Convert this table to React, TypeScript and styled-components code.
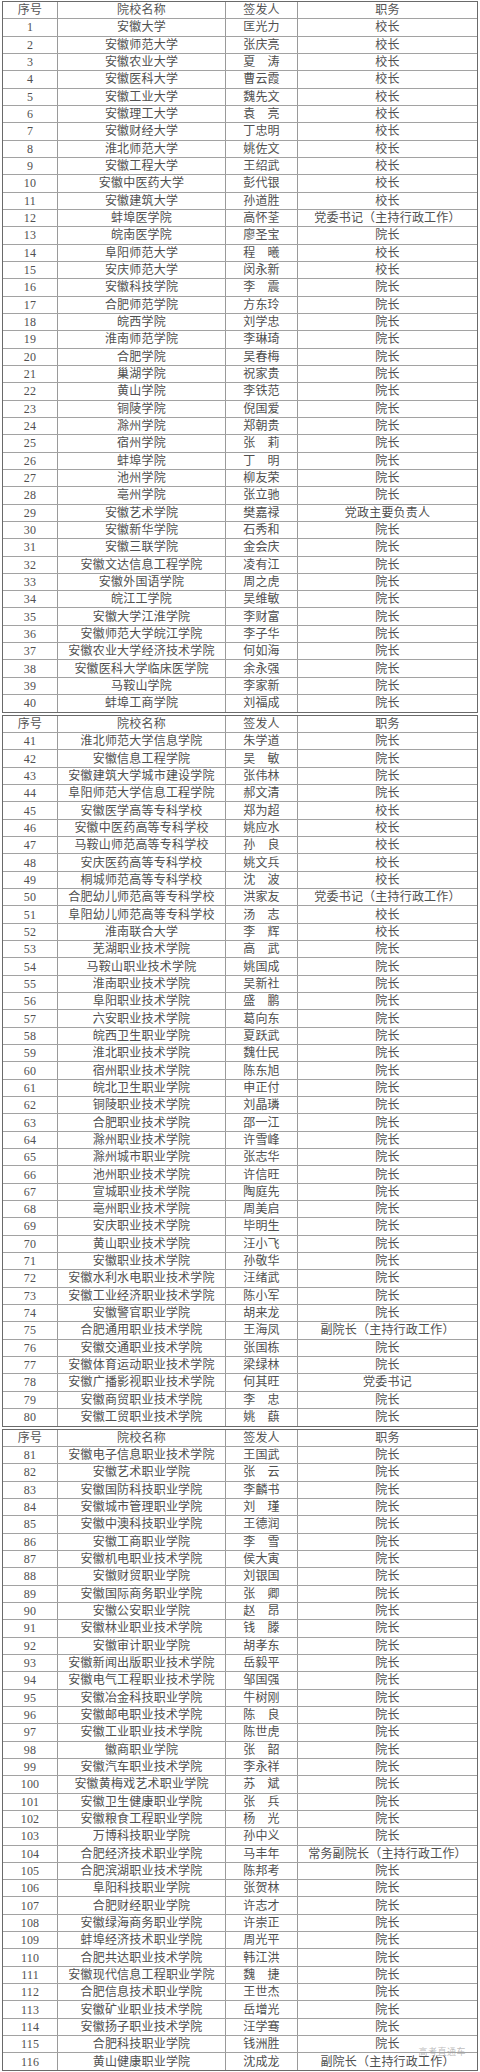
import React from 'react';
import styled, { createGlobalStyle } from 'styled-components';

type Entry = [number, string, string, string];

const GlobalStyle = createGlobalStyle`
  html, body {
    margin: 0;
    padding: 0;
    background: #ffffff;
  }
  * {
    box-sizing: border-box;
  }
`;

const Page = styled.div`
  position: relative;
  width: 480px;
  padding: 1px 2px 2px 2px;
  display: flex;
  flex-direction: column;
  gap: 2px;
  font-family: 'Liberation Serif', 'Noto Sans CJK SC', serif;
  color: #505050;
  background: #fff;
`;

const Sheet = styled.div`
  width: 476px;
  border: 1px solid #6a6a6a;
  display: flex;
  flex-direction: column;
`;

const Row = styled.div`
  display: grid;
  grid-template-columns: 55px 168px 72px 179px;
  height: 17.33px;
  border-bottom: 1px solid #a2a2a2;

  &:last-child {
    border-bottom: none;
    height: 16.7px;
  }
`;

const Cell = styled.div<{ $head?: boolean }>`
  display: flex;
  align-items: center;
  justify-content: center;
  font-size: 12px;
  line-height: 1;
  white-space: nowrap;
  overflow: hidden;
  border-right: 1px solid #9a9a9a;
  color: ${p => (p.$head ? '#555' : '#505050')};
  letter-spacing: 0.2px;

  &:last-child {
    border-right: none;
  }
`;

const Watermark = styled.div`
  position: absolute;
  right: 14px;
  bottom: 15px;
  font-family: 'Noto Sans CJK SC', sans-serif;
  font-size: 9px;
  color: rgba(160, 160, 160, 0.7);
  letter-spacing: 0.5px;
  pointer-events: none;
`;

const part1: Entry[] = [
  [1, '安徽大学', '匡光力', '校长'],
  [2, '安徽师范大学', '张庆亮', '校长'],
  [3, '安徽农业大学', '夏　涛', '校长'],
  [4, '安徽医科大学', '曹云霞', '校长'],
  [5, '安徽工业大学', '魏先文', '校长'],
  [6, '安徽理工大学', '袁　亮', '校长'],
  [7, '安徽财经大学', '丁忠明', '校长'],
  [8, '淮北师范大学', '姚佐文', '校长'],
  [9, '安徽工程大学', '王绍武', '校长'],
  [10, '安徽中医药大学', '彭代银', '校长'],
  [11, '安徽建筑大学', '孙道胜', '校长'],
  [12, '蚌埠医学院', '高怀荃', '党委书记（主持行政工作）'],
  [13, '皖南医学院', '廖圣宝', '院长'],
  [14, '阜阳师范大学', '程　曦', '校长'],
  [15, '安庆师范大学', '闵永新', '校长'],
  [16, '安徽科技学院', '李　震', '院长'],
  [17, '合肥师范学院', '方东玲', '院长'],
  [18, '皖西学院', '刘学忠', '院长'],
  [19, '淮南师范学院', '李琳琦', '院长'],
  [20, '合肥学院', '吴春梅', '院长'],
  [21, '巢湖学院', '祝家贵', '院长'],
  [22, '黄山学院', '李铁范', '院长'],
  [23, '铜陵学院', '倪国爱', '院长'],
  [24, '滁州学院', '郑朝贵', '院长'],
  [25, '宿州学院', '张　莉', '院长'],
  [26, '蚌埠学院', '丁　明', '院长'],
  [27, '池州学院', '柳友荣', '院长'],
  [28, '亳州学院', '张立驰', '院长'],
  [29, '安徽艺术学院', '樊嘉禄', '党政主要负责人'],
  [30, '安徽新华学院', '石秀和', '院长'],
  [31, '安徽三联学院', '金会庆', '院长'],
  [32, '安徽文达信息工程学院', '凌有江', '院长'],
  [33, '安徽外国语学院', '周之虎', '院长'],
  [34, '皖江工学院', '吴维敏', '院长'],
  [35, '安徽大学江淮学院', '李财富', '院长'],
  [36, '安徽师范大学皖江学院', '李子华', '院长'],
  [37, '安徽农业大学经济技术学院', '何如海', '院长'],
  [38, '安徽医科大学临床医学院', '余永强', '院长'],
  [39, '马鞍山学院', '李家新', '院长'],
  [40, '蚌埠工商学院', '刘福成', '院长'],
];

const part2: Entry[] = [
  [41, '淮北师范大学信息学院', '朱学道', '院长'],
  [42, '安徽信息工程学院', '吴　敏', '院长'],
  [43, '安徽建筑大学城市建设学院', '张伟林', '院长'],
  [44, '阜阳师范大学信息工程学院', '郝文清', '院长'],
  [45, '安徽医学高等专科学校', '郑为超', '校长'],
  [46, '安徽中医药高等专科学校', '姚应水', '校长'],
  [47, '马鞍山师范高等专科学校', '孙　良', '校长'],
  [48, '安庆医药高等专科学校', '姚文兵', '校长'],
  [49, '桐城师范高等专科学校', '沈　波', '校长'],
  [50, '合肥幼儿师范高等专科学校', '洪家友', '党委书记（主持行政工作）'],
  [51, '阜阳幼儿师范高等专科学校', '汤　志', '校长'],
  [52, '淮南联合大学', '李　辉', '校长'],
  [53, '芜湖职业技术学院', '高　武', '院长'],
  [54, '马鞍山职业技术学院', '姚国成', '院长'],
  [55, '淮南职业技术学院', '吴新社', '院长'],
  [56, '阜阳职业技术学院', '盛　鹏', '院长'],
  [57, '六安职业技术学院', '葛向东', '院长'],
  [58, '皖西卫生职业学院', '夏跃武', '院长'],
  [59, '淮北职业技术学院', '魏仕民', '院长'],
  [60, '宿州职业技术学院', '陈东旭', '院长'],
  [61, '皖北卫生职业学院', '申正付', '院长'],
  [62, '铜陵职业技术学院', '刘晶璘', '院长'],
  [63, '合肥职业技术学院', '邵一江', '院长'],
  [64, '滁州职业技术学院', '许雪峰', '院长'],
  [65, '滁州城市职业学院', '张志华', '院长'],
  [66, '池州职业技术学院', '许信旺', '院长'],
  [67, '宣城职业技术学院', '陶庭先', '院长'],
  [68, '亳州职业技术学院', '周美启', '院长'],
  [69, '安庆职业技术学院', '毕明生', '院长'],
  [70, '黄山职业技术学院', '汪小飞', '院长'],
  [71, '安徽职业技术学院', '孙敬华', '院长'],
  [72, '安徽水利水电职业技术学院', '汪绪武', '院长'],
  [73, '安徽工业经济职业技术学院', '陈小军', '院长'],
  [74, '安徽警官职业学院', '胡来龙', '院长'],
  [75, '合肥通用职业技术学院', '王海凤', '副院长（主持行政工作）'],
  [76, '安徽交通职业技术学院', '张国栋', '院长'],
  [77, '安徽体育运动职业技术学院', '梁绿林', '院长'],
  [78, '安徽广播影视职业技术学院', '何其旺', '党委书记'],
  [79, '安徽商贸职业技术学院', '李　忠', '院长'],
  [80, '安徽工贸职业技术学院', '姚　蕻', '院长'],
];

const part3: Entry[] = [
  [81, '安徽电子信息职业技术学院', '王国武', '院长'],
  [82, '安徽艺术职业学院', '张　云', '院长'],
  [83, '安徽国防科技职业学院', '李麟书', '院长'],
  [84, '安徽城市管理职业学院', '刘　瑾', '院长'],
  [85, '安徽中澳科技职业学院', '王德润', '院长'],
  [86, '安徽工商职业学院', '李　雪', '院长'],
  [87, '安徽机电职业技术学院', '侯大寅', '院长'],
  [88, '安徽财贸职业学院', '刘银国', '院长'],
  [89, '安徽国际商务职业学院', '张　卿', '院长'],
  [90, '安徽公安职业学院', '赵　昂', '院长'],
  [91, '安徽林业职业技术学院', '钱　滕', '院长'],
  [92, '安徽审计职业学院', '胡孝东', '院长'],
  [93, '安徽新闻出版职业技术学院', '岳毅平', '院长'],
  [94, '安徽电气工程职业技术学院', '邹国强', '院长'],
  [95, '安徽冶金科技职业学院', '牛树刚', '院长'],
  [96, '安徽邮电职业技术学院', '陈　良', '院长'],
  [97, '安徽工业职业技术学院', '陈世虎', '院长'],
  [98, '徽商职业学院', '张　韶', '院长'],
  [99, '安徽汽车职业技术学院', '李永祥', '院长'],
  [100, '安徽黄梅戏艺术职业学院', '苏　斌', '院长'],
  [101, '安徽卫生健康职业学院', '张　兵', '院长'],
  [102, '安徽粮食工程职业学院', '杨　光', '院长'],
  [103, '万博科技职业学院', '孙中义', '院长'],
  [104, '合肥经济技术职业学院', '马丰年', '常务副院长（主持行政工作）'],
  [105, '合肥滨湖职业技术学院', '陈邦考', '院长'],
  [106, '阜阳科技职业学院', '张贺林', '院长'],
  [107, '合肥财经职业学院', '许志才', '院长'],
  [108, '安徽绿海商务职业学院', '许崇正', '院长'],
  [109, '蚌埠经济技术职业学院', '周光平', '院长'],
  [110, '合肥共达职业技术学院', '韩江洪', '院长'],
  [111, '安徽现代信息工程职业学院', '魏　捷', '院长'],
  [112, '合肥信息技术职业学院', '王世杰', '院长'],
  [113, '安徽矿业职业技术学院', '岳增光', '院长'],
  [114, '安徽扬子职业技术学院', '汪学骞', '院长'],
  [115, '合肥科技职业学院', '钱洲胜', '院长'],
  [116, '黄山健康职业学院', '沈成龙', '副院长（主持行政工作）'],
];

const SchoolTable: React.FC<{ rows: Entry[] }> = ({ rows }) => (
  <Sheet>
    <Row>
      <Cell $head>序号</Cell>
      <Cell $head>院校名称</Cell>
      <Cell $head>签发人</Cell>
      <Cell $head>职务</Cell>
    </Row>
    {rows.map(([no, school, signer, title]) => (
      <Row key={no}>
        <Cell>{no}</Cell>
        <Cell>{school}</Cell>
        <Cell>{signer}</Cell>
        <Cell>{title}</Cell>
      </Row>
    ))}
  </Sheet>
);

const App: React.FC = () => {
  return (
    <>
      <GlobalStyle />
      <Page>
        <SchoolTable rows={part1} />
        <SchoolTable rows={part2} />
        <SchoolTable rows={part3} />
        <Watermark>高考直通车</Watermark>
      </Page>
    </>
  );
};

export default App;
